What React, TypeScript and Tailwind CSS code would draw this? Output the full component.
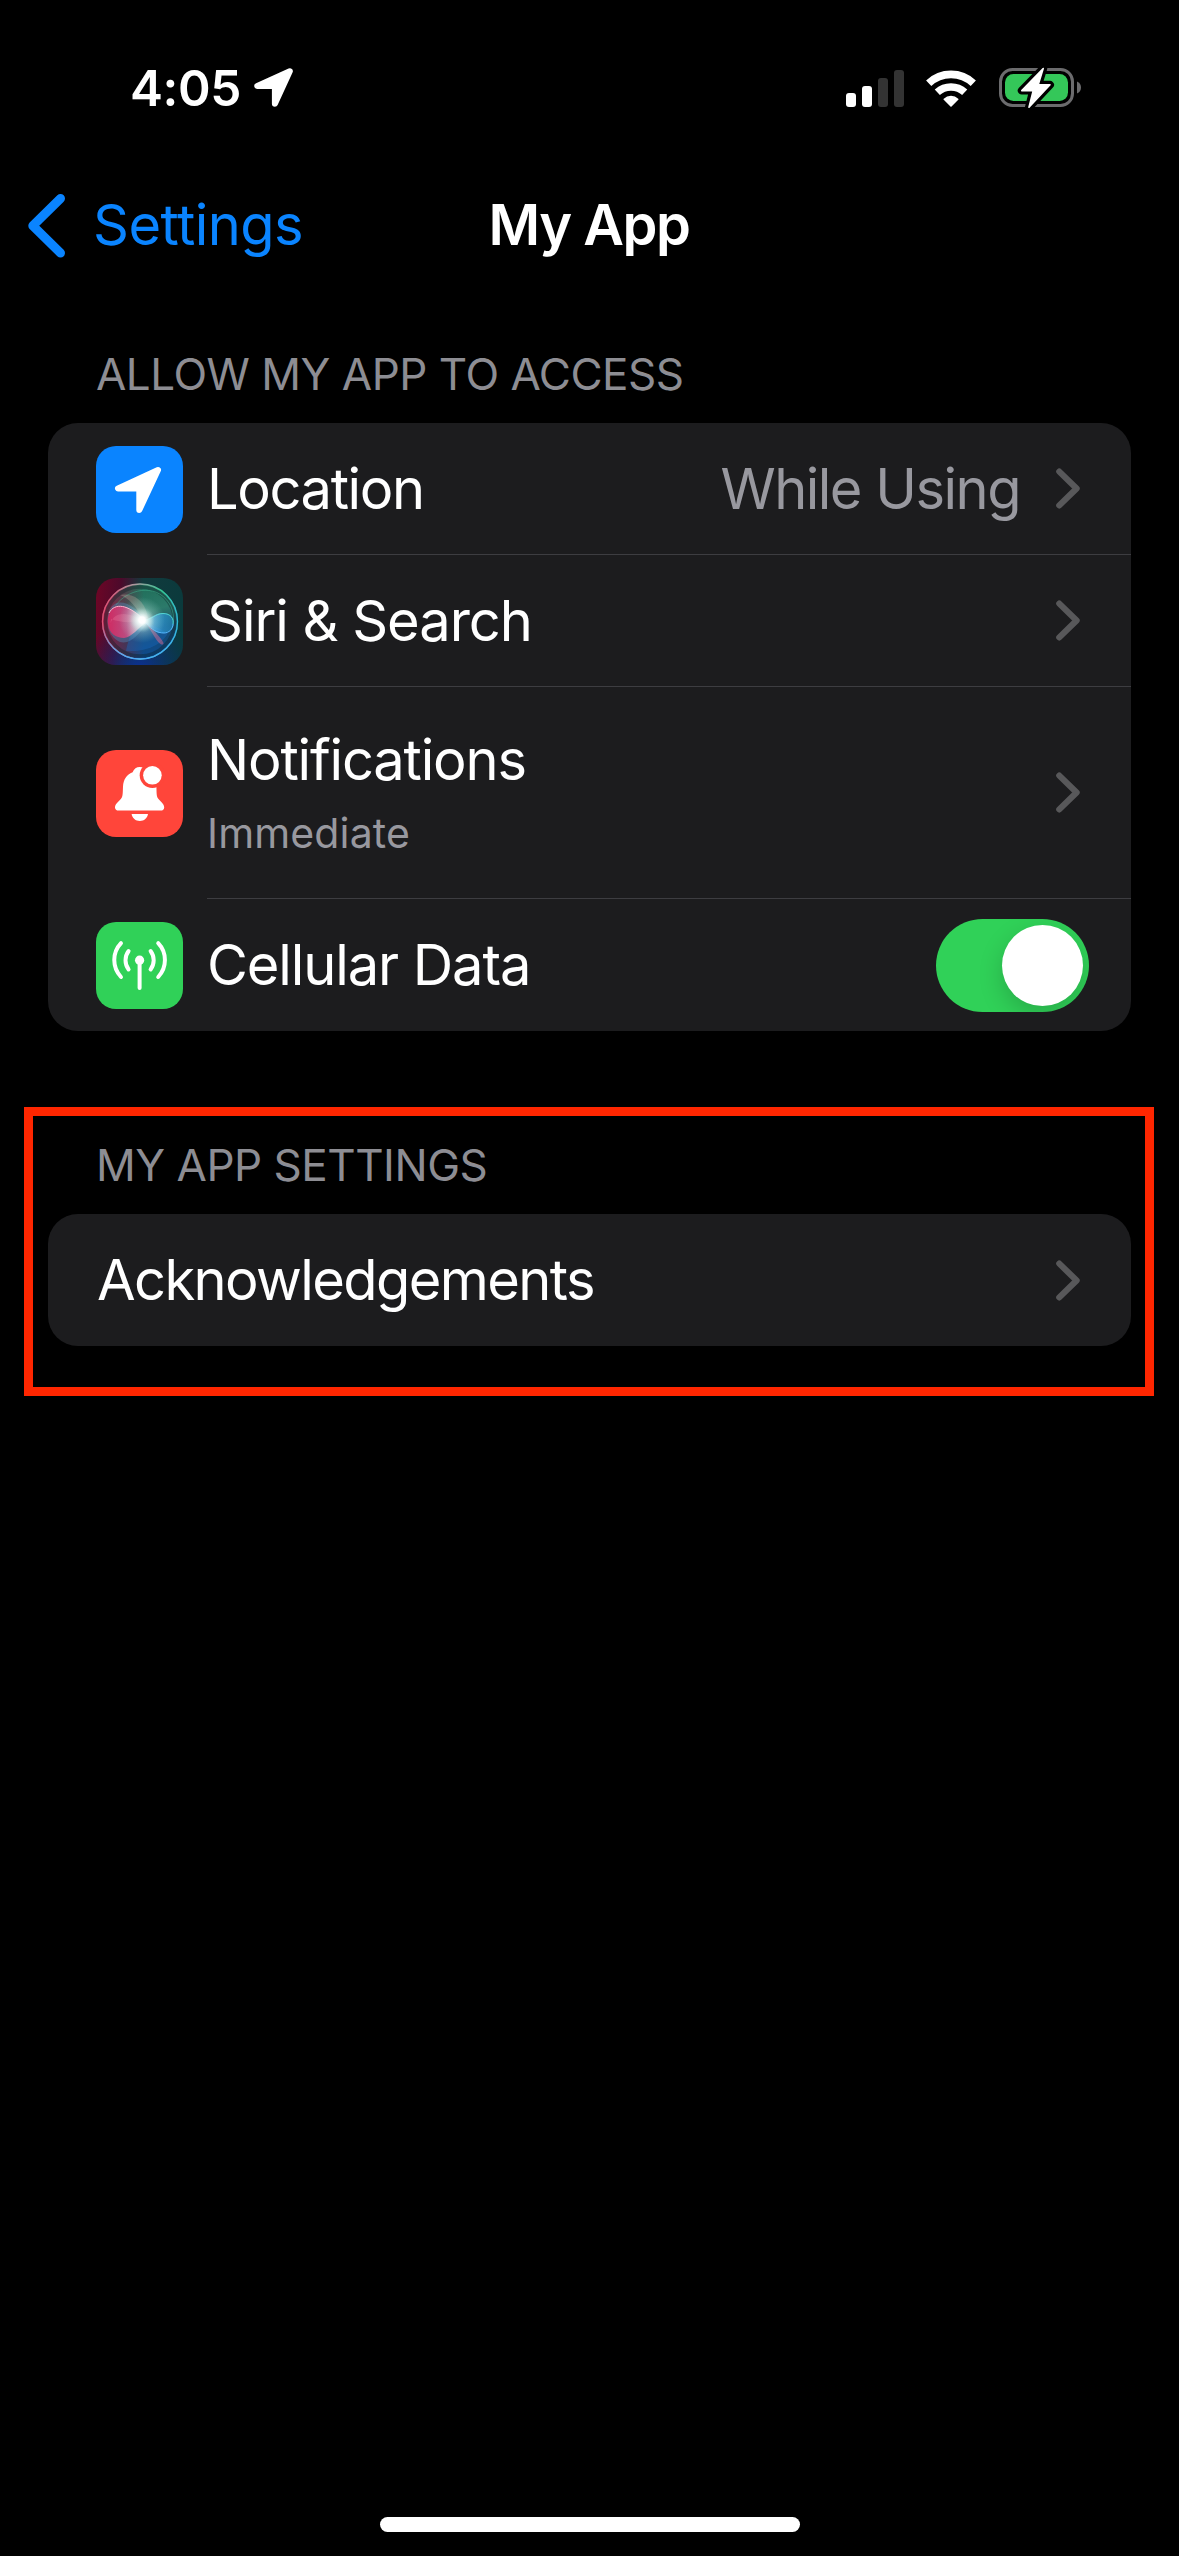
import type { ReactNode } from "react";

function LocationArrow() {
  return (
    <svg width="40" height="40" viewBox="0 0 40 40" className="ml-[13px] shrink-0">
      <path
        d="M35.8 3.3 3.3 18H20.9V35.8Z"
        fill="#fff"
        stroke="#fff"
        strokeWidth="6"
        strokeLinejoin="round"
      />
    </svg>
  );
}

function SignalBars() {
  return (
    <div className="flex h-[37px] items-end gap-[6px]">
      <div className="h-[14px] w-[10px] rounded-[3px] bg-white" />
      <div className="h-[21px] w-[10px] rounded-[3px] bg-white" />
      <div className="h-[29px] w-[10px] rounded-[3px] bg-[#333333]" />
      <div className="h-[37px] w-[10px] rounded-[3px] bg-[#333333]" />
    </div>
  );
}

function Wifi() {
  return (
    <svg width="50" height="37" viewBox="0 0 50 37" fill="none" className="ml-[22px]">
      <path d="M2.7 13.2A32.5 32.5 0 0 1 47.3 13.2" stroke="#fff" strokeWidth="7.6" />
      <path d="M11.3 22.3A20.3 20.3 0 0 1 38.7 22.3" stroke="#fff" strokeWidth="7.6" />
      <path
        d="M25 36 18.3 29.3A9.8 9.8 0 0 1 31.7 29.3Z"
        fill="#fff"
        stroke="#fff"
        strokeWidth="1.6"
        strokeLinejoin="round"
      />
    </svg>
  );
}

function Battery() {
  const bolt = "M44.2 1.6 22.8 23.6H34.2L30 40.2 51 17.8H39.2Z";
  return (
    <svg width="84" height="42" viewBox="0 0 84 42" fill="none" className="ml-[23px]">
      <rect x="1.5" y="2.5" width="72" height="36" rx="12" stroke="#6b6b6d" strokeWidth="3" />
      <rect x="6" y="7" width="63" height="27" rx="8.5" fill="#34c759" />
      <path d="M78 14.5C80.5 15.5 82 17.7 82 20.5S80.5 25.5 78 26.5Z" fill="#6b6b6d" />
      <path d={bolt} stroke="#000" strokeWidth="8" strokeLinejoin="round" />
      <path d={bolt} fill="#fff" stroke="#fff" strokeWidth="1.6" strokeLinejoin="round" />
    </svg>
  );
}

function Chevron() {
  return (
    <svg width="24" height="41" viewBox="0 0 24 41" fill="none" className="shrink-0">
      <path
        d="M3.3 3.6 20.6 20.5 3.3 37.4"
        stroke="#58585a"
        strokeWidth="6.2"
        strokeLinecap="round"
        strokeLinejoin="round"
      />
    </svg>
  );
}

function LocationIcon() {
  return (
    <svg width="87" height="87" viewBox="0 0 87 87" className="rounded-[20px] bg-[#0a84ff]">
      <path
        d="M62 24 22 42.4H43.3V64Z"
        fill="#fff"
        stroke="#fff"
        strokeWidth="6"
        strokeLinejoin="round"
      />
    </svg>
  );
}

function SiriIcon() {
  return (
    <svg width="87" height="87" viewBox="0 0 87 87" fill="none" className="rounded-[20px]">
      <defs>
        <linearGradient id="siriBg" x1="0" y1="0.4" x2="1" y2="0.5">
          <stop offset="0" stopColor="#6a0626" />
          <stop offset="0.25" stopColor="#4c0a2b" />
          <stop offset="0.5" stopColor="#123a3d" />
          <stop offset="1" stopColor="#0a3a3c" />
        </linearGradient>
        <radialGradient id="siriBlue" cx="0.5" cy="1.05" r="0.62">
          <stop offset="0" stopColor="#0b2f96" />
          <stop offset="1" stopColor="#0b2f6a" stopOpacity="0" />
        </radialGradient>
        <linearGradient id="siriRing" x1="0" y1="0.4" x2="1" y2="0.6">
          <stop offset="0" stopColor="#e04f74" />
          <stop offset="0.35" stopColor="#a99a9f" />
          <stop offset="0.7" stopColor="#35c795" />
          <stop offset="1" stopColor="#2fb9dc" />
        </linearGradient>
        <linearGradient id="siriRingLow" x1="0" y1="0" x2="0" y2="1">
          <stop offset="0.55" stopColor="#4aa8ff" stopOpacity="0" />
          <stop offset="1" stopColor="#4aa8ff" />
        </linearGradient>
        <linearGradient id="siriOrb" x1="0.35" y1="0" x2="0.6" y2="1">
          <stop offset="0" stopColor="#1d6b55" />
          <stop offset="0.4" stopColor="#2c7a6a" />
          <stop offset="0.65" stopColor="#1a4a66" />
          <stop offset="1" stopColor="#0b4a94" />
        </linearGradient>
        <linearGradient id="siriOrbLeft" x1="0" y1="0.5" x2="1" y2="0.5">
          <stop offset="0" stopColor="#a01240" stopOpacity="0.95" />
          <stop offset="0.3" stopColor="#6a2440" stopOpacity="0.6" />
          <stop offset="0.55" stopColor="#6a2440" stopOpacity="0" />
        </linearGradient>
        <linearGradient id="siriPink" x1="0" y1="0.5" x2="1" y2="0.5">
          <stop offset="0" stopColor="#e0245e" />
          <stop offset="0.5" stopColor="#cf4a82" />
          <stop offset="1" stopColor="#ffffff" />
        </linearGradient>
        <linearGradient id="siriCyan" x1="0" y1="0.5" x2="1" y2="0.5">
          <stop offset="0" stopColor="#ffffff" />
          <stop offset="0.4" stopColor="#3aa5e8" />
          <stop offset="1" stopColor="#1d82b5" />
        </linearGradient>
        <radialGradient id="siriGlow">
          <stop offset="0" stopColor="#fff" />
          <stop offset="0.25" stopColor="#fff" stopOpacity="0.95" />
          <stop offset="0.5" stopColor="#d5f5f0" stopOpacity="0.45" />
          <stop offset="1" stopColor="#9fe8dc" stopOpacity="0" />
        </radialGradient>
      </defs>
      <rect width="87" height="87" fill="url(#siriBg)" />
      <rect width="87" height="87" fill="url(#siriBlue)" />
      <circle cx="44" cy="43.5" r="38" fill="url(#siriOrb)" />
      <circle cx="44" cy="43.5" r="38" fill="url(#siriOrbLeft)" />
      <circle cx="44" cy="43.5" r="34.5" stroke="#0c2428" strokeOpacity="0.4" strokeWidth="3.5" />
      <path d="M20 27C31 12 59 4 73 25 79 34 78 46 76 50" stroke="#3fae8d" strokeOpacity="0.55" strokeWidth="1" />
      <path d="M46 42C42 30 33 20 24 17 38 14 50 24 52 40Z" fill="#c9b5a6" fillOpacity="0.3" />
      <path d="M46 42C36 50 32 62 30 73 44 74 64 70 72 55Z" fill="#1769c2" fillOpacity="0.4" />
      <path d="M48 41C38 26 22 18 14 31 9 42 11 58 24 64 36 67 44 54 52 44Z" fill="#4f8ec0" fillOpacity="0.4" />
      <path
        d="M48 41C40 34 31 27 23 28 14 29 11 38 12 46 13 55 20 60 28 60 37 59 42 49 50 45Z"
        fill="url(#siriPink)"
        fillOpacity="0.85"
      />
      <path d="M13 35C19 24 32 27 46 40" stroke="#ffb3cc" strokeWidth="1" />
      <path d="M14 50C14 34 30 32 46 42 36 45 26 45 15 41Z" fill="#ff9ab8" fillOpacity="0.22" />
      <path
        d="M46 42C54 42 58 35 67 35 82 35 81 54 68 55 58 56 54 47 46 42Z"
        fill="url(#siriCyan)"
        fillOpacity="0.7"
      />
      <path d="M48 42C56 42 59 35.5 67 35.5 75 35.5 78 41 77 46" stroke="#55dcd2" strokeWidth="0.9" />
      <path d="M50 45C56 52 61 55 68 55 73 55 77 51 77 46" stroke="#54b6ff" strokeWidth="1" />
      <path d="M50 45C58 53 65 59 67.5 65 67 69 62 65 58 58Z" fill="#d8688f" fillOpacity="0.5" />
      <circle cx="46" cy="42" r="23" fill="url(#siriGlow)" fillOpacity="0.7" />
      <circle cx="46" cy="42" r="13" fill="url(#siriGlow)" />
      <circle cx="44" cy="43.5" r="37.5" stroke="url(#siriRing)" strokeWidth="1.4" />
      <circle cx="44" cy="43.5" r="37.5" stroke="url(#siriRingLow)" strokeWidth="1.4" />
    </svg>
  );
}

function BellIcon() {
  return (
    <svg width="87" height="87" viewBox="0 0 87 87" className="rounded-[20px] bg-[#ff453a]">
      <path
        d="M43.7 17C40.5 17 38 18.8 36.6 22.2 30.5 24.5 27.4 29.5 27 36.5 26.7 43 27 46.5 24.8 49 22.5 51.8 19 54 19 57.5 19 59.6 20.5 60.6 22.5 60.6H64.7C66.8 60.6 68.2 59.6 68.2 57.5 68.2 54 64.8 51.8 62.5 49 60.3 46.5 60.7 43 60.4 36.5 60 29.5 56.9 24.5 50.8 22.2 49.4 18.8 46.9 17 43.7 17Z"
        fill="#fff"
      />
      <path d="M35.6 64H52C51.4 68.2 48 71 43.8 71S36.2 68.2 35.6 64Z" fill="#fff" />
      <circle cx="56.4" cy="25.3" r="12.7" fill="#ff453a" />
      <circle cx="56.4" cy="25.3" r="9.3" fill="#fff" />
    </svg>
  );
}

function CellularIcon() {
  return (
    <svg width="87" height="87" viewBox="0 0 87 87" fill="none" className="rounded-[20px] bg-[#30d158]">
      <g stroke="#fff" strokeWidth="4" strokeLinecap="round">
        <path d="M43.6 38V66" />
        <path d="M32.6 29A15.4 15.4 0 0 0 32.6 47.5" />
        <path d="M54.6 29A15.4 15.4 0 0 1 54.6 47.5" />
        <path d="M25 21.2A24.6 24.6 0 0 0 25 55" />
        <path d="M62.2 21.2A24.6 24.6 0 0 1 62.2 55" />
      </g>
      <circle cx="43.6" cy="38.2" r="4.6" fill="#fff" />
    </svg>
  );
}

function Toggle() {
  return (
    <div className="mt-[1px] mr-[42px] flex h-[93px] w-[153px] items-center justify-end overflow-hidden rounded-full bg-[#30d158] pr-[6px]">
      <div className="size-[81px] rounded-full bg-white shadow-[0_9px_24px_rgba(0,0,0,0.18)]" />
    </div>
  );
}

interface RowProps {
  icon: ReactNode;
  iconTop?: string;
  height?: string;
  last?: boolean;
  children: ReactNode;
}

function Row({ icon, iconTop = "pt-[23px]", height = "h-[132px]", last = false, children }: RowProps) {
  return (
    <div className={`flex ${height}`}>
      <div className={`w-[159px] shrink-0 pl-[48px] ${iconTop}`}>{icon}</div>
      <div
        className={`flex flex-1 items-center justify-between ${last ? "" : "border-b border-[#3d3d41]"}`}
      >
        {children}
      </div>
    </div>
  );
}

export default function App() {
  return (
    <div className="flex h-[2556px] w-[1179px] flex-col overflow-hidden bg-black font-['Inter',sans-serif] text-[56px] leading-[68px] whitespace-nowrap text-white [&_svg]:block">
      <header className="flex h-[176px] shrink-0 items-center justify-between pr-[96px] pl-[130px]">
        <div className="flex items-center">
          <span className="text-[49.5px] font-semibold tracking-[-0.37px]">4:05</span>
          <LocationArrow />
        </div>
        <div className="flex items-center">
          <SignalBars />
          <Wifi />
          <Battery />
        </div>
      </header>

      <nav className="grid h-[98px] shrink-0 grid-cols-[1fr_auto_1fr] items-center">
        <div className="flex items-center pl-[27px] text-[#0a84ff]">
          <svg width="40" height="65" viewBox="0 0 40 65" fill="none">
            <path
              d="M33.5 5.5 5.8 32.8 33.5 60"
              stroke="#0a84ff"
              strokeWidth="9"
              strokeLinecap="round"
              strokeLinejoin="round"
            />
          </svg>
          <span className="ml-[26px] tracking-[-0.55px]">Settings</span>
        </div>
        <h1 className="mr-[1px] font-semibold tracking-[-1.5px]">My App</h1>
        <div />
      </nav>

      <main className="flex flex-col">
        <section className="mr-[48px] ml-[48px]">
          <h2 className="mt-[70px] mb-[19px] ml-[48px] text-[44px] leading-[60px] tracking-[-0.49px] text-[#8d8d93]">
            ALLOW MY APP TO ACCESS
          </h2>
          <div className="overflow-hidden rounded-[30px] bg-[#1c1c1e]">
            <Row icon={<LocationIcon />}>
              <span className="tracking-[-1.4px]">Location</span>
              <div className="flex items-center gap-[36px] pr-[51px]">
                <span className="tracking-[-1.5px] text-[#98989f]">While Using</span>
                <Chevron />
              </div>
            </Row>
            <Row icon={<SiriIcon />}>
              <span className="tracking-[-1.05px]">Siri &amp; Search</span>
              <div className="pr-[51px]">
                <Chevron />
              </div>
            </Row>
            <Row icon={<BellIcon />} iconTop="pt-[63px]" height="h-[212px]">
              <div className="flex flex-col gap-[11px] self-start pt-[39px]">
                <span className="tracking-[-1.17px]">Notifications</span>
                <span className="text-[41px] leading-[56px] tracking-[0.15px] text-[#98989f]">
                  Immediate
                </span>
              </div>
              <div className="pr-[51px]">
                <Chevron />
              </div>
            </Row>
            <Row icon={<CellularIcon />} last>
              <span className="tracking-[-1.1px]">Cellular Data</span>
              <Toggle />
            </Row>
          </div>
        </section>

        <section className="mt-[76px] mr-[25px] ml-[24px] h-[289px] border-[9px] border-[#ff2600] pr-[14px] pl-[15px]">
          <h2 className="mt-[19px] mb-[19px] ml-[48px] text-[44px] leading-[60px] tracking-[-0.48px] text-[#8d8d93]">
            MY APP SETTINGS
          </h2>
          <div className="flex h-[132px] items-center justify-between rounded-[30px] bg-[#1c1c1e] pr-[51px] pl-[49px]">
            <span className="tracking-[-1.59px]">Acknowledgements</span>
            <Chevron />
          </div>
        </section>
      </main>

      <div className="mx-auto mt-auto mb-[24px] h-[15px] w-[420px] shrink-0 rounded-full bg-white" />
    </div>
  );
}
